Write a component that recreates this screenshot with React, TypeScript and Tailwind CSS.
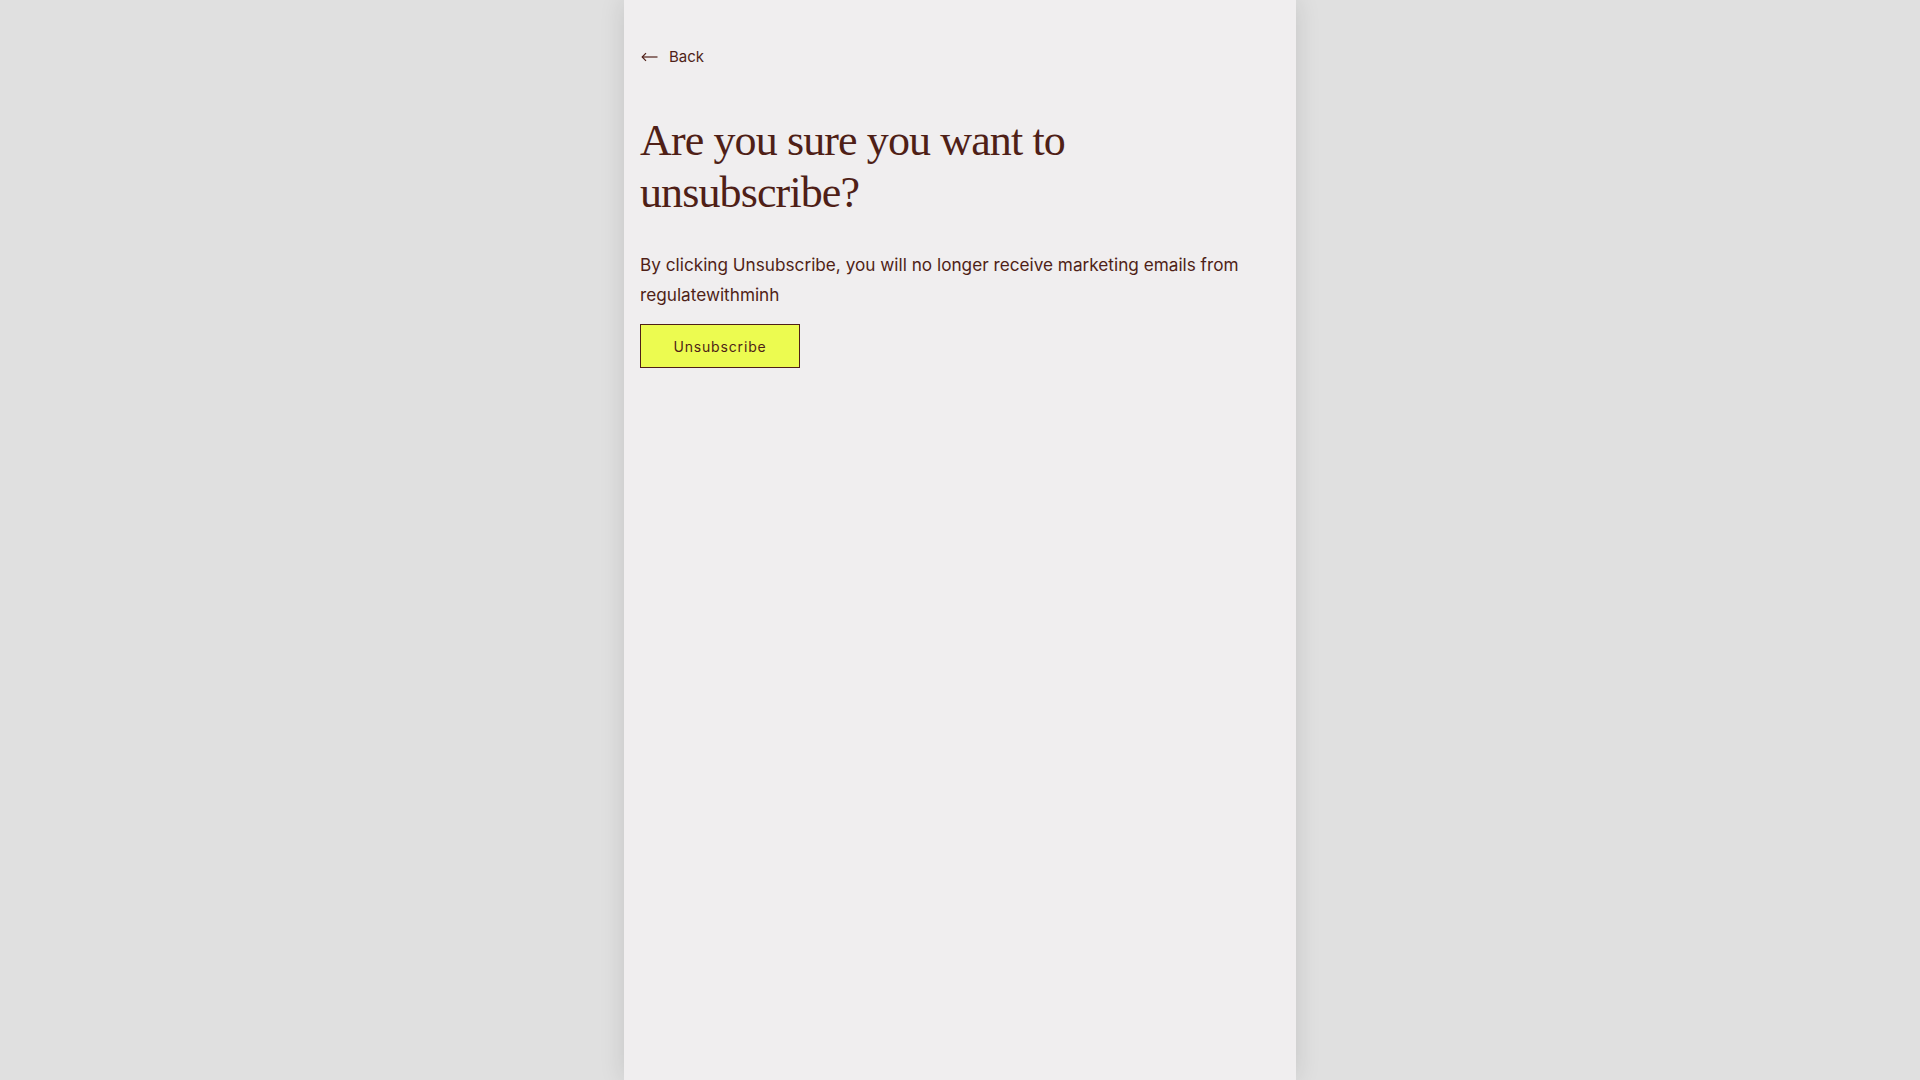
export default function App() {
    return (
        <div className="min-h-screen bg-[#e0e0e0]">
            <div className="mx-auto min-h-screen max-w-2xl bg-[#f0eeef] px-4 pt-[46px] text-[#4f1f17] shadow-[0_0_24px_rgba(0,0,0,0.12)]">
                {/* Volver */}
                <a
                    href="#"
                    className="flex items-center gap-[11px] pl-[1px] font-['Inter',sans-serif] text-[15px] leading-[22px]"
                >
                    <svg width="17" height="10" viewBox="0 0 17 10" fill="none" stroke="currentColor" strokeWidth="1.2">
                        <path d="M16.5 5H1.2" />
                        <path d="M5 1.2L1.2 5L5 8.8" />
                    </svg>
                    Back
                </a>

                {/* Título */}
                <h1 className="mt-[47px] font-['Liberation_Serif',serif] text-[44px] leading-[52px] font-normal tracking-[-0.02em]">
                    Are you sure you want to
                    <br />
                    unsubscribe?
                </h1>

                <p className="mt-[31px] font-['Inter',sans-serif] text-[17.2px] leading-[30px]">
                    By clicking Unsubscribe, you will no longer receive marketing emails from
                    regulatewithminh
                </p>

                <button
                    type="button"
                    className="mt-[14px] h-[44px] w-[160px] border border-[#4f1f17] bg-[#ecfb50] font-['Inter',sans-serif] text-[14px] tracking-[0.06em] text-[#4f1f17]"
                >
                    Unsubscribe
                </button>
            </div>
        </div>
    );
}
